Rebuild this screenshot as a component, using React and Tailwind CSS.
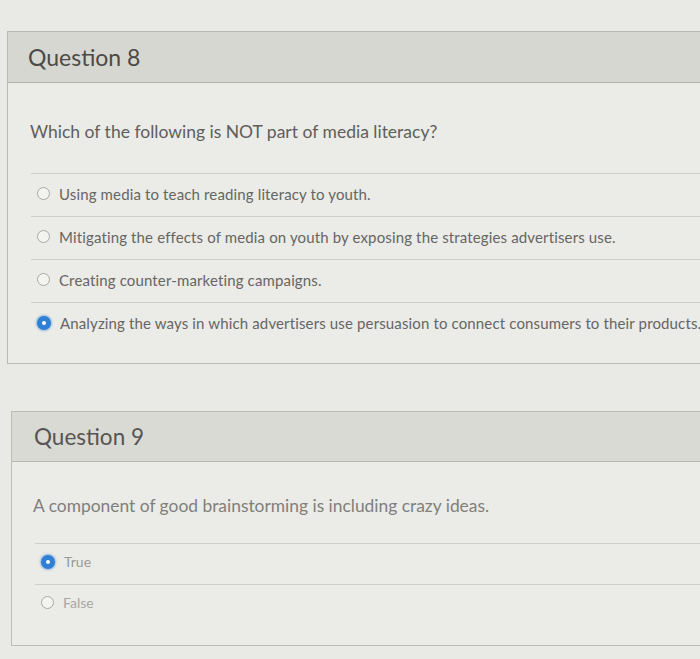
import React from "react";

function Radio({ checked }) {
  if (checked) {
    return (
      <span className="flex h-[14px] w-[14px] shrink-0 items-center justify-center rounded-full bg-[#2f7fd4] shadow-[0_0_2px_1px_rgba(47,127,212,0.45)]">
        <span className="h-[4px] w-[4px] rounded-full bg-white" />
      </span>
    );
  }
  return <span className="h-[13px] w-[13px] shrink-0 rounded-full border-[1.5px] border-[#a9a9a4] bg-[#f3f3ef]" />;
}

function Row({ checked, children, size = "text-[15px] tracking-[0.14px]", color = "text-[#666664]", h = "h-[43px] pb-[3px]" }) {
  return (
    <div className={`flex ${h} items-center gap-[9px] border-t border-[#cfcfca] pl-[6px]`}>
      <Radio checked={checked} />
      <span className={`${size} ${color} whitespace-nowrap`}>{children}</span>
    </div>
  );
}

export default function App() {
  return (
    <div
      className="h-[659px] w-[700px] overflow-hidden bg-[#e9e9e5] pt-[31px]"
      style={{ fontFamily: "Lato, 'Open Sans', sans-serif" }}
    >
      <div className="ml-[7px] w-[740px] border border-[#b9b9b4] bg-[#ebebe7]">
        <div className="flex h-[51px] items-center border-b border-[#b3b3ae] bg-[#d7d7d2] pl-[20px]">
          <span className="text-[23px] text-[#4a4a48]">Question 8</span>
        </div>
        <div className="pt-[36px]">
          <div className="pl-[22px] text-[17.5px] text-[#5e5e5c]">Which of the following is NOT part of media literacy?</div>
          <div className="ml-[23px] mt-[28px] pb-[18px]">
            <Row>Using media to teach reading literacy to youth.</Row>
            <Row>Mitigating the effects of media on youth by exposing the strategies advertisers use.</Row>
            <Row>Creating counter-marketing campaigns.</Row>
            <Row checked>Analyzing the ways in which advertisers use persuasion to connect consumers to their products.</Row>
          </div>
        </div>
      </div>

      <div className="ml-[11px] mt-[47px] w-[740px] border border-[#bdbdb8] bg-[#ebebe7]">
        <div className="flex h-[50px] items-center border-b border-[#b9b9b4] bg-[#dadad5] pl-[22px]">
          <span className="text-[22.5px] text-[#555553]">Question 9</span>
        </div>
        <div className="pt-[31px]">
          <div className="pl-[21px] text-[17.4px] text-[#7f7f7d]">A component of good brainstorming is including crazy ideas.</div>
          <div className="ml-[23px] mt-[24px] pb-[20px]">
            <Row checked size="text-[14px]" color="text-[#9a9a98]" h="h-[41px] pb-[5px]">True</Row>
            <Row size="text-[14px]" color="text-[#a8a8a6]" h="h-[41px] pb-[5px]">False</Row>
          </div>
        </div>
      </div>
    </div>
  );
}
